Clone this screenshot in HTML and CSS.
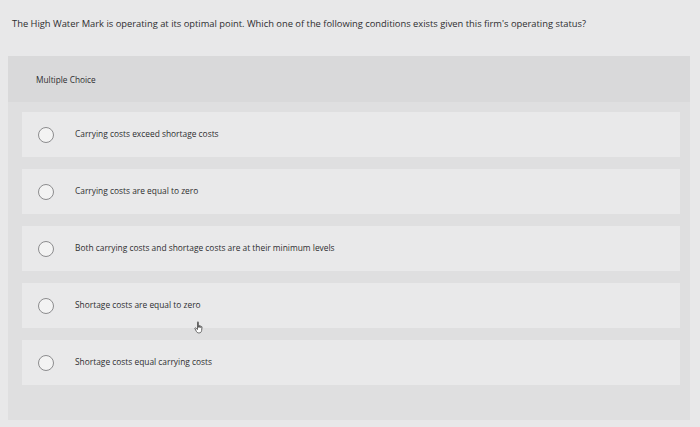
FILE: index.html
```html
<!DOCTYPE html>
<html lang="en">
<head>
<meta charset="utf-8">
<title>Multiple Choice</title>
<link rel="stylesheet" href="styles.css">
</head>
<body>
<p class="question">The High Water Mark is operating at its optimal point. Which one of the following conditions exists given this firm's operating status?</p>
<section class="panel">
  <div class="panel-head">Multiple Choice</div>
  <ul class="choices">
    <li class="choice"><span class="radio"></span><span class="label">Carrying costs exceed shortage costs</span></li>
    <li class="choice"><span class="radio"></span><span class="label">Carrying costs are equal to zero</span></li>
    <li class="choice"><span class="radio"></span><span class="label">Both carrying costs and shortage costs are at their minimum levels</span></li>
    <li class="choice"><span class="radio"></span><span class="label">Shortage costs are equal to zero</span>
      <svg class="cursor" width="12" height="14" viewBox="0 0 12 14" aria-hidden="true"><path d="M3.5 1.2c0-.6.9-.6.9 0v5.2l.3-1.6c.1-.6 1-.5.9.1v1.5l.3-1.2c.2-.6 1-.4.9.2v1.3l.3-.8c.2-.6 1-.4.9.2l-.4 3.5c-.2 1.3-1 2.3-2.3 2.3H4.4c-.9 0-1.5-.6-1.9-1.3L.9 7.6c-.3-.5.3-1 .8-.6l1.8 1.5z" fill="#fff" stroke="#555" stroke-width=".9" stroke-linejoin="round"/></svg>
    </li>
    <li class="choice"><span class="radio"></span><span class="label">Shortage costs equal carrying costs</span></li>
  </ul>
</section>
</body>
</html>
```

FILE: styles.css
```css
html, body {
  margin: 0;
  padding: 0;
}
body {
  width: 700px;
  height: 427px;
  overflow: hidden;
  background: #e8e8e9;
  font-family: "Open Sans", "Liberation Sans", sans-serif;
  color: #2e2e30;
}
.question {
  margin: 0;
  padding: 17px 0 0 12px;
  height: 56px;
  box-sizing: border-box;
  font-size: 9.35px;
  line-height: 14px;
}
.panel {
  margin: 0 10px 0 8px;
  height: 364px;
  background: #dfdfe0;
}
.panel-head {
  height: 46px;
  box-sizing: border-box;
  padding: 18px 0 0 28px;
  background: #d9d9da;
  font-size: 8.3px;
  line-height: 12px;
}
.choices {
  list-style: none;
  margin: 0;
  padding: 10px 10px 0 14px;
  display: flex;
  flex-direction: column;
  gap: 12px;
}
.choice {
  position: relative;
  height: 45px;
  background: #e9e9ea;
  display: flex;
  align-items: center;
  padding-left: 16px;
}
.radio {
  width: 14px;
  height: 14px;
  border: 1.5px solid #8c8c8e;
  border-radius: 50%;
  background: #f3f3f3;
  flex: none;
}
.label {
  margin-left: 21px;
  font-size: 8.4px;
  line-height: 12px;
  margin-top: -2px;
}
.cursor {
  position: absolute;
  left: 172px;
  top: 38px;
}
```
